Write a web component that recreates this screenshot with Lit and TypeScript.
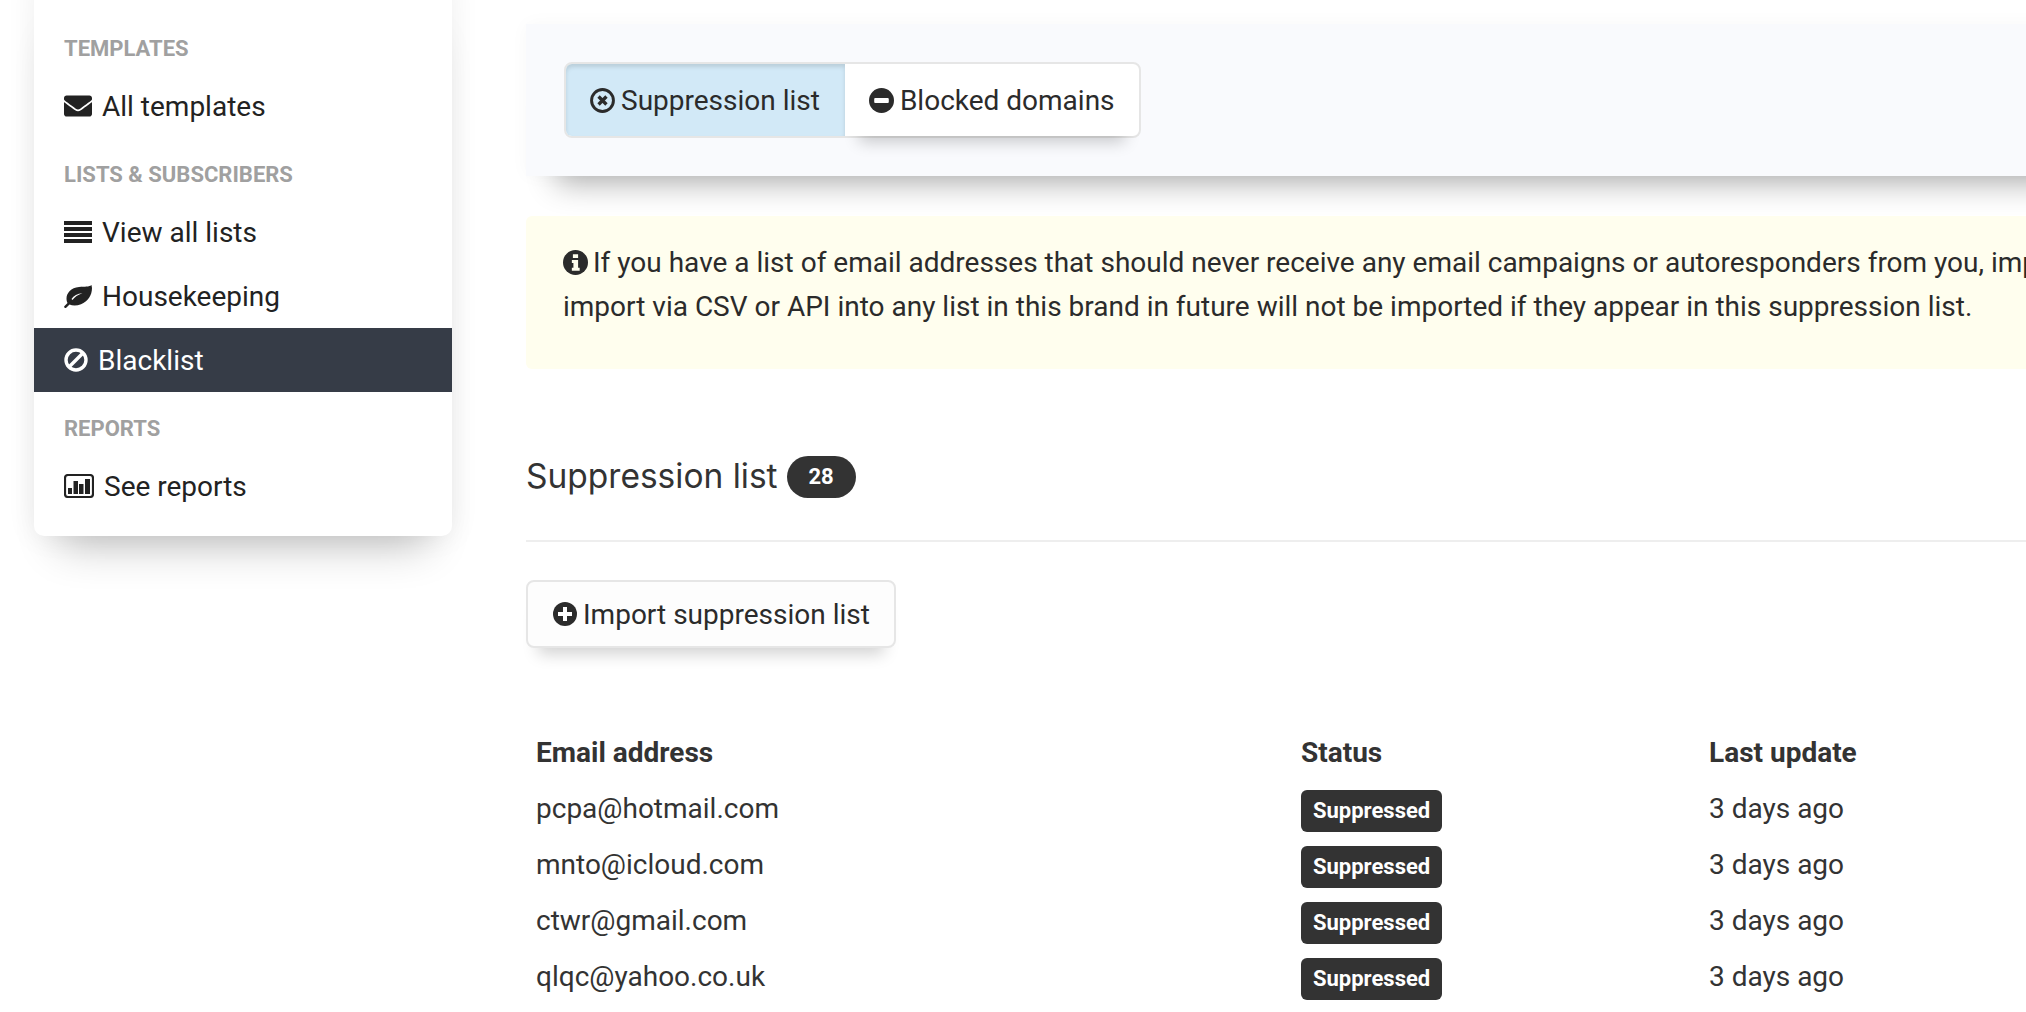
import { LitElement, html, css, svg } from 'lit';
import { customElement } from 'lit/decorators.js';

const ICONS = {
  envelope: svg`<svg class="ic" width="28" height="22" viewBox="0 64 512 384"><path d="M502.3 190.8c3.9-3.1 9.7-.2 9.7 4.7V400c0 26.5-21.5 48-48 48H48c-26.5 0-48-21.5-48-48V195.6c0-5 5.7-7.8 9.7-4.7 22.4 17.4 52.1 39.5 154.1 113.6 21.1 15.4 56.7 47.8 92.2 47.6 35.7.3 72-32.8 92.3-47.6 102-74.1 131.6-96.3 154-113.7zM256 320c23.2.4 56.6-29.2 73.4-41.4 132.7-96.3 142.8-104.7 173.4-128.7 5.8-4.5 9.2-11.5 9.2-18.9v-19c0-26.5-21.5-48-48-48H48C21.5 64 0 85.5 0 112v19c0 7.4 3.4 14.3 9.2 18.9 30.6 23.9 40.7 32.4 173.4 128.7 16.8 12.2 50.2 41.8 73.4 41.4z"/></svg>`,
  lines: svg`<svg class="ic" width="28" height="22" viewBox="0 0 28 22"><path d="M0 0h28v4H0zM0 6h28v4H0zM0 12h28v4H0zM0 18h28v4H0z"/></svg>`,
  leaf: svg`<svg class="ic" width="28" height="23" viewBox="0 0 28 23"><path fill-rule="evenodd" d="M27.5 0C25 2 21 1.500 15 2 7 2.700 2.500 8 2.500 13.500c0 1.700.4 3.400 1 4.500L.5 21c-.5.5-.5 1.500.5 2 .8.3 1.400-.2 2-1l2.500-2.500c3 1.300 7.500 1.300 11.500-.3C24 16.700 28 10 28 3zM7.500 14c2-3.300 6-5.300 11-5.700C14 10 10.500 12 8.500 15z"/></svg>`,
  ban: svg`<svg class="ic" width="24" height="24" viewBox="0 0 24 24"><circle cx="12" cy="12" r="10" fill="none" stroke="currentColor" stroke-width="3.4"/><path d="M5.5 18.5 18.5 5.5" stroke="currentColor" stroke-width="3.4"/></svg>`,
  chart: svg`<svg class="ic" width="30" height="24" viewBox="0 0 30 24"><rect x="1" y="1" width="28" height="22" rx="3" fill="none" stroke="currentColor" stroke-width="2.2"/><path d="M4 14h4v6H4zM9.500 7H14v13H9.500zM15 10h4.500v10H15zM21 5h5v15h-5z"/></svg>`,
  times: svg`<svg class="ic" width="25" height="25" viewBox="0 0 24 24"><circle cx="12" cy="12" r="10.500" fill="none" stroke="currentColor" stroke-width="2.800"/><path d="M8.200 8.200l7.600 7.600M15.800 8.200l-7.600 7.600" stroke="currentColor" stroke-width="3.200"/></svg>`,
  minus: svg`<svg class="ic" width="25" height="25" viewBox="0 0 24 24"><circle cx="12" cy="12" r="12"/><rect x="5" y="9.500" width="14" height="5" rx="1" fill="#fff"/></svg>`,
  plus: svg`<svg class="ic" width="24" height="24" viewBox="0 0 24 24"><circle cx="12" cy="12" r="12"/><path d="M10 5h4v5h5v4h-5v5h-4v-5H5v-4h5z" fill="#fff"/></svg>`,
  info: svg`<svg class="ic" width="25" height="25" viewBox="0 0 24 24"><circle cx="12" cy="12" r="12"/><path d="M9.500 4h5v3.600h-5zM8.500 9.500h6V17h1.500v3H8.500v-3H10v-4.500H8.500z" fill="#fffeee"/></svg>`,
};

const ROWS = ['pcpa@hotmail.com', 'mnto@icloud.com', 'ctwr@gmail.com', 'qlqc@yahoo.co.uk'];

@customElement('app-root')
export class AppRoot extends LitElement {
  static styles = css`
    :host {
      display: flex;
      align-items: flex-start;
      width: 2026px;
      height: 1012px;
      overflow: hidden;
      background: #fff;
      font-family: Roboto, sans-serif;
      font-size: 28px;
      color: #2b2b2b;
    }
    .ic { fill: currentColor; flex: none; }

    .sidebar {
      flex: none;
      box-sizing: border-box;
      width: 418px;
      margin: -20px 0 0 34px;
      padding: 32px 0 18px;
      background: #fff;
      border-radius: 0 0 10px 10px;
      box-shadow: 0 35px 40px -25px rgba(0, 0, 0, 0.24), 0 0 30px rgba(0, 0, 0, 0.07);
    }
    .section {
      box-sizing: border-box;
      height: 62px;
      padding: 23px 30px 11px;
      font-size: 22px;
      line-height: 28px;
      font-weight: 700;
      color: #a0a0a0;
    }
    .item {
      display: flex;
      align-items: center;
      height: 64px;
      padding: 0 30px;
      gap: 10px;
      color: #222;
    }
    .item.active { background: #363c47; color: #fff; }

    .main {
      flex: none;
      width: 1600px;
      margin: 24px 0 0 74px;
    }
    .well {
      box-sizing: border-box;
      height: 152px;
      padding: 38px 38px;
      background: #f9fafd;
      box-shadow: 0 38px 30px -30px rgba(0, 0, 0, 0.3), 0 0 18px rgba(0, 0, 0, 0.03);
    }
    .tabs {
      display: inline-flex;
      box-sizing: border-box;
      height: 76px;
      border: 2px solid #e6e6e6;
      border-radius: 8px;
      background: #fff;
    }
    .tab {
      display: flex;
      align-items: center;
      gap: 6px;
      padding: 0 24px;
      border-radius: 0 6px 6px 0;
      box-shadow: 0 20px 16px -14px rgba(0, 0, 0, 0.2);
    }
    .tab.on {
      padding-right: 25px;
      background: #d2e9f7;
      border-radius: 6px 0 0 6px;
      box-shadow: inset 0 3px 4px rgba(0, 0, 0, 0.12);
    }
    .alert {
      box-sizing: border-box;
      height: 153px;
      margin-top: 40px;
      padding: 25px 37px 40px;
      background: #fffeee;
      border-radius: 6px 0 0 6px;
      line-height: 44px;
      white-space: nowrap;
      overflow: hidden;
    }
    .alert .ic { vertical-align: -3px; margin-right: 5px; }
    .head {
      display: flex;
      align-items: center;
      gap: 9px;
      height: 42px;
      margin-top: 87px;
      padding-bottom: 42px;
      border-bottom: 2px solid #eee;
    }
    h2 {
      margin: -3px 0 0;
      font-family: Inter, sans-serif;
      font-size: 33.5px;
      font-weight: 400;
      color: #333;
    }
    .count {
      width: 69px;
      height: 42px;
      border-radius: 21px;
      background: #333;
      color: #fff;
      font-size: 22px;
      font-weight: 700;
      line-height: 42px;
      text-align: center;
    }
    .btn {
      display: inline-flex;
      align-items: center;
      box-sizing: border-box;
      gap: 6px;
      height: 68px;
      margin-top: 38px;
      padding: 0 24px 0 25px;
      border: 2px solid #e6e6e6;
      border-radius: 8px;
      background: #fdfdfd;
      box-shadow: 0 18px 16px -12px rgba(0, 0, 0, 0.18);
    }
    table {
      display: block;
      margin-top: 76px;
      border-collapse: collapse;
      color: #333;
    }
    tr { height: 56px; }
    th, td { padding: 0 0 0 10px; text-align: left; }
    th { font-weight: 700; }
    .c1 { width: 755px; }
    .c2 { width: 398px; }
    .badge {
      display: inline-block;
      margin-top: 6px;
      padding: 0 12px;
      height: 42px;
      border-radius: 6px;
      background: #333;
      color: #fff;
      font-size: 22px;
      font-weight: 700;
      line-height: 42px;
      vertical-align: middle;
    }
  `;

  render() {
    return html`
      <nav class="sidebar">
        <div class="section">TEMPLATES</div>
        <div class="item">${ICONS.envelope}All templates</div>
        <div class="section">LISTS &amp; SUBSCRIBERS</div>
        <div class="item">${ICONS.lines}View all lists</div>
        <div class="item">${ICONS.leaf}Housekeeping</div>
        <div class="item active">${ICONS.ban}Blacklist</div>
        <div class="section">REPORTS</div>
        <div class="item">${ICONS.chart}See reports</div>
      </nav>
      <main class="main">
        <div class="well">
          <div class="tabs">
            <div class="tab on">${ICONS.times}Suppression list</div>
            <div class="tab">${ICONS.minus}Blocked domains</div>
          </div>
        </div>
        <div class="alert">
          ${ICONS.info}If you have a list of email addresses that should never receive any email campaigns or autoresponders from you, import them here. Emails you attempt to<br />
          import via CSV or API into any list in this brand in future will not be imported if they appear in this suppression list.
        </div>
        <div class="head">
          <h2>Suppression list</h2>
          <span class="count">28</span>
        </div>
        <div class="btn">${ICONS.plus}Import suppression list</div>
        <table>
          <tr>
            <th class="c1">Email address</th>
            <th class="c2">Status</th>
            <th>Last update</th>
          </tr>
          ${ROWS.map(email => html`
            <tr>
              <td>${email}</td>
              <td><span class="badge">Suppressed</span></td>
              <td>3 days ago</td>
            </tr>
          `)}
        </table>
      </main>
    `;
  }
}
